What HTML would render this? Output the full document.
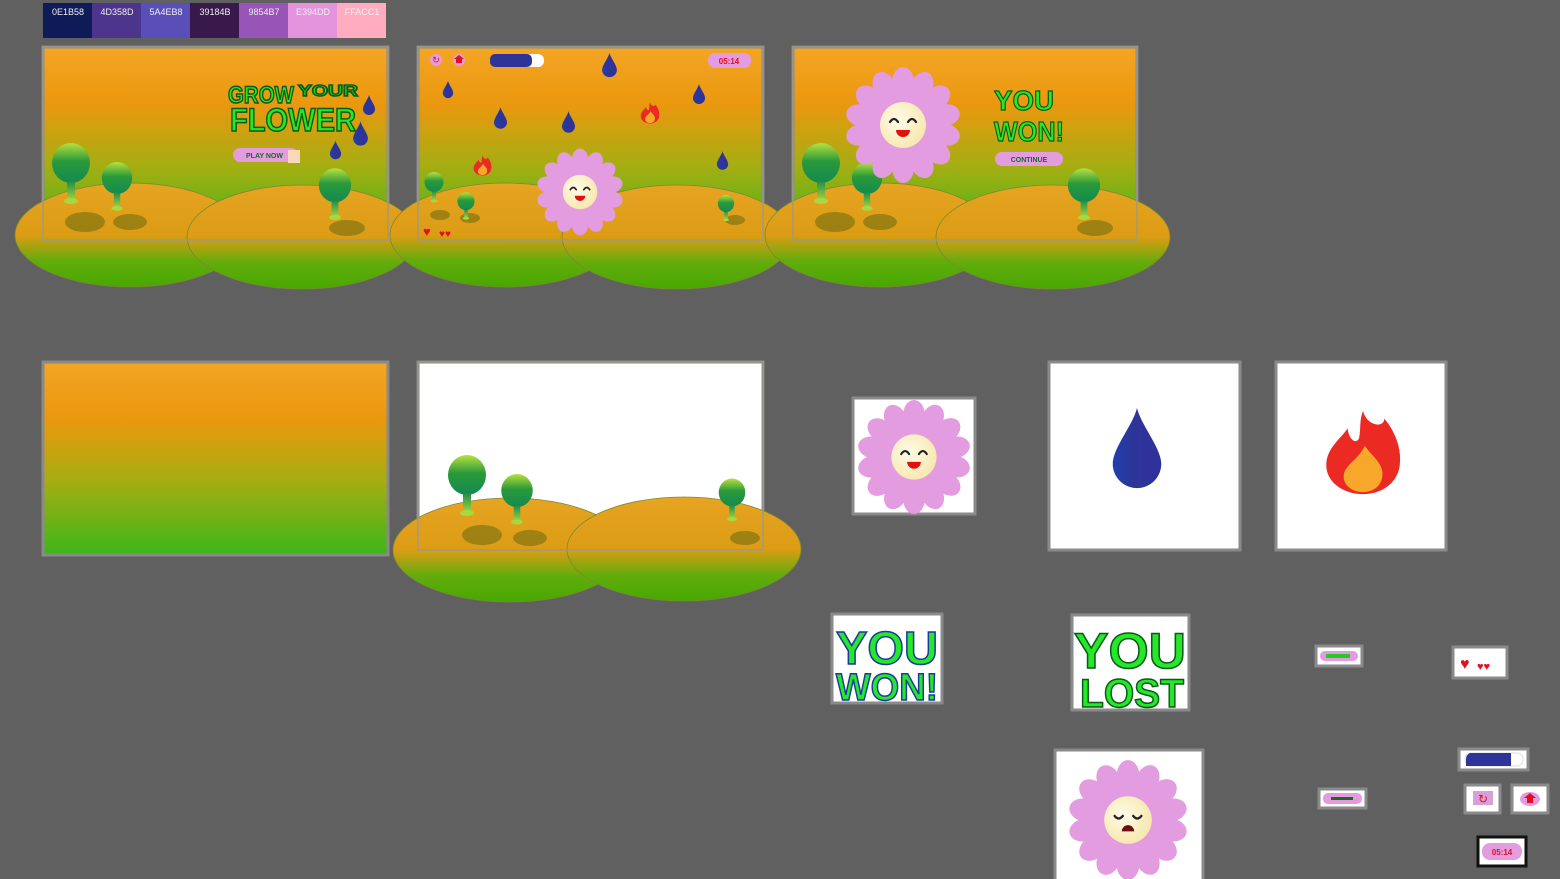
<!DOCTYPE html>
<html><head><meta charset="utf-8"><style>
html,body{margin:0;padding:0;background:#606060;}
svg{display:block}
text{font-family:"Liberation Sans",sans-serif;}
</style></head><body>
<svg width="1560" height="879" viewBox="0 0 1560 879" xmlns="http://www.w3.org/2000/svg">
<defs>
<linearGradient id="sky" x1="0" y1="0" x2="0" y2="1">
<stop offset="0" stop-color="#f3a524"/><stop offset="0.3" stop-color="#ea980e"/><stop offset="0.62" stop-color="#a4ae12"/><stop offset="1" stop-color="#3cb61a"/></linearGradient>
<linearGradient id="hill" x1="0" y1="0" x2="0" y2="1">
<stop offset="0" stop-color="#e6a422"/><stop offset="0.5" stop-color="#dc9c14"/><stop offset="0.75" stop-color="#62ac0c"/><stop offset="1" stop-color="#48a800"/></linearGradient>
<linearGradient id="tree" x1="0" y1="0" x2="0" y2="1">
<stop offset="0" stop-color="#b8e040"/><stop offset="0.45" stop-color="#2a9a3a"/><stop offset="1" stop-color="#138a50"/></linearGradient>
<linearGradient id="trunk" x1="0" y1="0" x2="0" y2="1">
<stop offset="0" stop-color="#1f8a4a"/><stop offset="1" stop-color="#a8d840"/></linearGradient>
<radialGradient id="face" cx="0.4" cy="0.4" r="0.7"><stop offset="0" stop-color="#fffbe8"/><stop offset="1" stop-color="#f6e6a8"/></radialGradient>
<linearGradient id="drop" x1="0" y1="0" x2="1" y2="0"><stop offset="0" stop-color="#1f3fb0"/><stop offset="0.4" stop-color="#2d3598"/><stop offset="1" stop-color="#30309a"/></linearGradient>
<symbol id="flower" viewBox="-60 -60 120 120">
<g fill="#e39ce0">
<circle r="36"/>
<g id="pet"><ellipse cx="0" cy="-43" rx="11" ry="15"/></g>
<use href="#pet" transform="rotate(25.7)"/><use href="#pet" transform="rotate(51.4)"/><use href="#pet" transform="rotate(77.1)"/><use href="#pet" transform="rotate(102.8)"/><use href="#pet" transform="rotate(128.5)"/><use href="#pet" transform="rotate(154.2)"/><use href="#pet" transform="rotate(180)"/><use href="#pet" transform="rotate(205.7)"/><use href="#pet" transform="rotate(231.4)"/><use href="#pet" transform="rotate(257.1)"/><use href="#pet" transform="rotate(282.8)"/><use href="#pet" transform="rotate(308.5)"/><use href="#pet" transform="rotate(334.2)"/>
</g>
<circle r="23" fill="url(#face)"/>
<path d="M-13,-3 q4,-6 8,0 M5,-3 q4,-6 8,0" stroke="#222" stroke-width="2.2" fill="none" stroke-linecap="round"/>
<path d="M-7,5 h14 a7,7 0 0 1 -14,0z" fill="#e01010"/>
</symbol>
<symbol id="sadflower" viewBox="-60 -60 120 120">
<use href="#flower" x="-60" y="-60" width="120" height="120"/>
<circle r="22" fill="url(#face)"/>
<path d="M-13,-4 q4,5 8,0 M5,-4 q4,5 8,0" stroke="#222" stroke-width="2.2" fill="none" stroke-linecap="round"/>
<path d="M-6,11 a6,6 0 0 1 12,0z" fill="#6a1010"/>
</symbol>
<symbol id="dropS" viewBox="0 0 60 90">
<path d="M30,2 C26,20 4,45 4,62 A26,26 0 0 0 56,62 C56,45 34,20 30,2Z" fill="url(#drop)"/>
</symbol>
<symbol id="fireS" viewBox="0 0 80 90">
<path d="M40,2 C44,18 62,20 62,10 C74,24 80,42 78,58 C76,76 60,88 40,88 C20,88 2,76 2,58 C2,40 18,30 24,20 C26,34 34,36 36,30 C38,20 36,12 40,2Z" fill="#ec2a24"/>
<path d="M42,38 C48,48 62,56 60,70 C58,82 48,86 40,86 C30,86 20,80 20,70 C20,58 34,54 42,38Z" fill="#f7a82a"/>
</symbol>
<symbol id="treeS" viewBox="0 0 40 70">
<ellipse cx="20" cy="20" rx="19" ry="20" fill="url(#tree)"/>
<rect x="16" y="38" width="8" height="20" fill="url(#trunk)"/>
<ellipse cx="20" cy="58" rx="7" ry="3" fill="#a8d840"/>
</symbol>
</defs>

<!-- palette -->
<rect x="43" y="3" width="49" height="35" fill="#0e1b58"/>
<rect x="92" y="3" width="49" height="35" fill="#4d358d"/>
<rect x="141" y="3" width="49" height="35" fill="#5a4eb8"/>
<rect x="190" y="3" width="49" height="35" fill="#39184b"/>
<rect x="239" y="3" width="49" height="35" fill="#9854b7"/>
<rect x="288" y="3" width="49" height="35" fill="#e394dd"/>
<rect x="337" y="3" width="49" height="35" fill="#ffacc1"/>
<g font-size="9" fill="#eee" text-anchor="middle">
<text x="68" y="15">0E1B58</text><text x="117" y="15">4D358D</text><text x="166" y="15">5A4EB8</text><text x="215" y="15">39184B</text><text x="264" y="15">9854B7</text><text x="313" y="15">E394DD</text><text x="362" y="15">FFACC1</text></g>

<!-- frames sky -->
<rect x="43" y="47" width="345" height="193" fill="url(#sky)" stroke="#8a8a8a" stroke-width="3"/>
<rect x="418" y="47" width="345" height="193" fill="url(#sky)" stroke="#8a8a8a" stroke-width="3"/>
<rect x="793" y="47" width="344" height="193" fill="url(#sky)" stroke="#8a8a8a" stroke-width="3"/>
<rect x="43" y="362" width="345" height="193" fill="url(#sky)" stroke="#8a8a8a" stroke-width="3"/>
<rect x="418" y="362" width="345" height="188" fill="#fff" stroke="#8a8a8a" stroke-width="3"/>

<!-- hills -->
<g stroke="#7a8a30" stroke-width="0.8">
<ellipse cx="130" cy="235" rx="115" ry="52" fill="url(#hill)"/><ellipse cx="302" cy="237" rx="115" ry="52" fill="url(#hill)"/>
<ellipse cx="505" cy="235" rx="115" ry="52" fill="url(#hill)"/><ellipse cx="677" cy="237" rx="115" ry="52" fill="url(#hill)"/>
<ellipse cx="880" cy="235" rx="115" ry="52" fill="url(#hill)"/><ellipse cx="1053" cy="237" rx="117" ry="52" fill="url(#hill)"/>
<ellipse cx="510" cy="550" rx="117" ry="52" fill="url(#hill)"/><ellipse cx="684" cy="549" rx="117" ry="52" fill="url(#hill)"/>
</g>
<g fill="none" stroke="#9a9a8a" stroke-width="2" opacity="0.7">
<rect x="43" y="47" width="345" height="193"/><rect x="418" y="47" width="345" height="193"/><rect x="793" y="47" width="344" height="193"/><rect x="418" y="362" width="345" height="188"/></g>

<!-- shadows -->
<g fill="#6a6a10" opacity="0.55">
<ellipse cx="85" cy="222" rx="20" ry="10"/><ellipse cx="130" cy="222" rx="17" ry="8"/><ellipse cx="347" cy="228" rx="18" ry="8"/>
<ellipse cx="440" cy="215" rx="10" ry="5"/><ellipse cx="470" cy="218" rx="10" ry="5"/><ellipse cx="735" cy="220" rx="10" ry="5"/>
<ellipse cx="835" cy="222" rx="20" ry="10"/><ellipse cx="880" cy="222" rx="17" ry="8"/><ellipse cx="1095" cy="228" rx="18" ry="8"/>
<ellipse cx="482" cy="535" rx="20" ry="10"/><ellipse cx="530" cy="538" rx="17" ry="8"/><ellipse cx="745" cy="538" rx="15" ry="7"/>
</g>
<!-- trees -->
<use href="#treeS" x="51" y="143" width="40" height="70"/>
<use href="#treeS" x="101" y="162" width="32" height="56"/>
<use href="#treeS" x="318" y="168" width="34" height="60"/>
<use href="#treeS" x="424" y="172" width="20" height="35"/>
<use href="#treeS" x="457" y="192" width="18" height="32"/>
<use href="#treeS" x="717" y="195" width="18" height="30"/>
<use href="#treeS" x="801" y="143" width="40" height="70"/>
<use href="#treeS" x="851" y="162" width="32" height="56"/>
<use href="#treeS" x="1067" y="168" width="34" height="60"/>
<use href="#treeS" x="447" y="455" width="40" height="70"/>
<use href="#treeS" x="500" y="474" width="34" height="58"/>
<use href="#treeS" x="718" y="478" width="28" height="50"/>

<!-- frame 1 title -->
<g font-weight="bold" fill="#25e82a" stroke="#0b5a18" stroke-width="1.5">
<text x="228" y="103" font-size="24" textLength="66" lengthAdjust="spacingAndGlyphs">GROW</text><text x="298" y="96" font-size="16" textLength="60" lengthAdjust="spacingAndGlyphs">YOUR</text>
<text x="230" y="131" font-size="32" textLength="126" lengthAdjust="spacingAndGlyphs">FLOWER</text></g>
<rect x="233" y="148" width="65" height="14" rx="7" fill="#e39ce0"/>
<text x="246" y="158" font-size="7" font-weight="bold" fill="#1a6a20">PLAY NOW</text>
<rect x="288" y="150" width="12" height="13" fill="#f8d8b8"/>
<use href="#dropS" x="362" y="94" width="14" height="22"/>
<use href="#dropS" x="352" y="120" width="17" height="27"/>
<use href="#dropS" x="329" y="140" width="13" height="20"/>

<!-- frame 2 -->
<circle cx="436" cy="60" r="6" fill="#e39ce0"/><text x="436" y="63" font-size="9" fill="#e01020" text-anchor="middle">↻</text>
<circle cx="459" cy="60" r="6" fill="#e39ce0"/><path d="M459,55 l5,4 h-2 v4 h-6 v-4 h-2z" fill="#e01020"/>
<rect x="490" y="54" width="54" height="13" rx="6" fill="#fff"/><rect x="490" y="54" width="42" height="13" rx="5" fill="#2d3598"/>
<rect x="708" y="53" width="43" height="15" rx="7" fill="#e39ce0"/><text x="729" y="64" font-size="8" fill="#e01020" text-anchor="middle" font-weight="bold">05:14</text>
<use href="#dropS" x="601" y="52" width="17" height="26"/>
<use href="#dropS" x="442" y="80" width="12" height="19"/>
<use href="#dropS" x="493" y="106" width="15" height="24"/>
<use href="#dropS" x="561" y="110" width="15" height="24"/>
<use href="#dropS" x="692" y="83" width="14" height="22"/>
<use href="#dropS" x="716" y="150" width="13" height="21"/>
<use href="#fireS" x="640" y="102" width="20" height="22"/>
<use href="#fireS" x="473" y="155" width="19" height="21"/>
<use href="#flower" x="535" y="147" width="90" height="90"/>
<text x="423" y="236" font-size="13" fill="#e01020">♥</text><text x="439" y="237" font-size="10" fill="#e01020">♥♥</text>

<!-- frame 3 -->
<use href="#flower" x="843" y="65" width="120" height="120"/>
<g font-weight="bold" fill="#25e82a" stroke="#0b5a18" stroke-width="1.2">
<text x="994" y="110" font-size="28" textLength="60" lengthAdjust="spacingAndGlyphs">YOU</text><text x="994" y="141" font-size="28" textLength="70" lengthAdjust="spacingAndGlyphs">WON!</text></g>
<rect x="995" y="152" width="68" height="14" rx="7" fill="#e39ce0"/>
<text x="1029" y="162" font-size="7" font-weight="bold" fill="#1a6a20" text-anchor="middle">CONTINUE</text>

<!-- cards -->
<rect x="853" y="398" width="122" height="116" fill="#fff" stroke="#8a8a8a" stroke-width="3"/>
<use href="#flower" x="855" y="398" width="118" height="118"/>
<rect x="1049" y="362" width="191" height="188" fill="#fff" stroke="#8a8a8a" stroke-width="3"/>
<use href="#dropS" x="1109" y="404" width="56" height="88"/>
<rect x="1276" y="362" width="170" height="188" fill="#fff" stroke="#8a8a8a" stroke-width="3"/>
<use href="#fireS" x="1323" y="409" width="80" height="87"/>

<rect x="832" y="614" width="110" height="89" fill="#fff" stroke="#8a8a8a" stroke-width="3"/>
<g font-weight="bold" fill="#25e82a" stroke="#1a3aa0" stroke-width="1.5">
<text x="836" y="664" font-size="46" textLength="102" lengthAdjust="spacingAndGlyphs">YOU</text>
<text x="836" y="700" font-size="38" textLength="102" lengthAdjust="spacingAndGlyphs">WON!</text></g>
<rect x="1072" y="615" width="117" height="95" fill="#fff" stroke="#8a8a8a" stroke-width="3"/>
<g font-weight="bold" fill="#25e82a" stroke="#0b5a18" stroke-width="1.5">
<text x="1074" y="668" font-size="50" textLength="112" lengthAdjust="spacingAndGlyphs">YOU</text>
<text x="1080" y="707" font-size="40" textLength="104" lengthAdjust="spacingAndGlyphs">LOST</text></g>
<rect x="1055" y="750" width="148" height="140" fill="#fff" stroke="#8a8a8a" stroke-width="3"/>
<use href="#sadflower" x="1066" y="758" width="124" height="124"/>

<!-- small ui -->
<rect x="1316" y="646" width="46" height="20" fill="#fff" stroke="#8a8a8a" stroke-width="3"/>
<rect x="1320" y="651" width="38" height="10" rx="5" fill="#e39ce0"/><rect x="1326" y="654" width="24" height="4" fill="#22cc22"/>
<rect x="1453" y="647" width="54" height="31" fill="#fff" stroke="#8a8a8a" stroke-width="3"/>
<text x="1460" y="669" font-size="16" fill="#e01020">♥</text><text x="1477" y="670" font-size="11" fill="#e01020">♥♥</text>
<rect x="1459" y="749" width="69" height="21" fill="#fff" stroke="#8a8a8a" stroke-width="3"/>
<rect x="1465" y="753" width="58" height="13" rx="6" fill="#fff" stroke="#ddd"/><path d="M1470,753 h41 v13 h-45 v-7 q0,-4 4,-6z" fill="#2d3598"/>
<rect x="1319" y="789" width="47" height="19" fill="#fff" stroke="#8a8a8a" stroke-width="3"/>
<rect x="1323" y="793" width="39" height="11" rx="5" fill="#e39ce0"/><rect x="1331" y="797" width="22" height="3" fill="#1a6a20"/>
<rect x="1465" y="785" width="35" height="28" fill="#fff" stroke="#8a8a8a" stroke-width="3"/>
<rect x="1473" y="791" width="20" height="14" fill="#d8a0d8"/><text x="1483" y="803" font-size="12" fill="#e01020" text-anchor="middle">↻</text>
<rect x="1512" y="785" width="36" height="28" fill="#fff" stroke="#8a8a8a" stroke-width="3"/>
<ellipse cx="1530" cy="799" rx="10" ry="7" fill="#e39ce0"/><path d="M1530,793 l6,5 h-3 v5 h-6 v-5 h-3z" fill="#e01020"/>
<rect x="1478" y="837" width="48" height="29" fill="#fff" stroke="#111" stroke-width="3"/>
<rect x="1482" y="843" width="40" height="17" rx="8" fill="#e39ce0"/><text x="1502" y="855" font-size="8" fill="#e01020" text-anchor="middle" font-weight="bold">05:14</text>
</svg>
</body></html>
